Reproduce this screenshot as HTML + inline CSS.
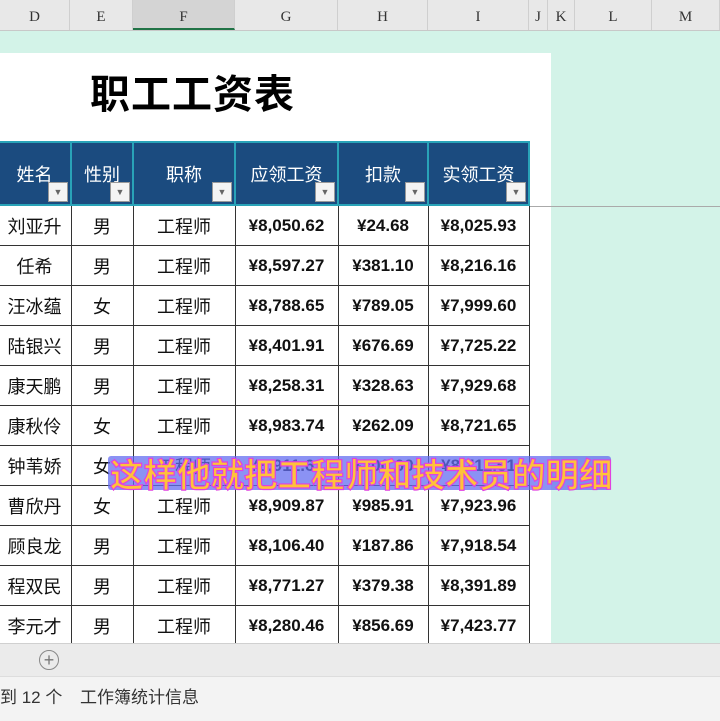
<!DOCTYPE html><html><head><meta charset="utf-8"><style>
body{margin:0;width:720px;height:720px;overflow:hidden;background:#d3f3e8;font-family:"Liberation Sans","Noto Sans CJK SC",sans-serif;position:relative}
.hdr{position:absolute;left:0;top:0;width:720px;height:30px;background:#e8e8e8;border-bottom:1px solid #c8c8c8}
.hdr div{position:absolute;top:0;height:30px;line-height:34px;text-align:center;font-family:"Liberation Serif",serif;font-size:15px;color:#333;border-right:1px solid #cfcfcf;box-sizing:border-box}
.sheet{position:absolute;left:0;top:53px;width:551px;height:590px;background:#fff}
.title{position:absolute;left:90px;top:62px;font-size:40px;font-weight:bold;color:#000;font-family:"Noto Sans CJK SC",sans-serif;letter-spacing:1px}
table{position:absolute;left:-3px;top:141px;border-collapse:collapse;font-family:"Liberation Sans","Noto Sans CJK SC",sans-serif}
td{border:1.5px solid #333;text-align:center;font-size:17px;font-weight:bold;height:39px;line-height:20px;padding:0;color:#111;vertical-align:middle}
td.c{font-weight:normal;font-size:18px;font-family:"Noto Sans CJK SC",sans-serif}
th{background:#1b4b7f;color:#fff;border:2px solid #29a3b8;font-weight:normal;font-size:18px;height:61px;position:relative;padding:0}
th span.dd{position:absolute;right:2px;bottom:2px;width:18px;height:18px;background:#f4f4f4;border:1px solid #999;color:#666;font-size:9px;line-height:18px}
.tabs{position:absolute;left:0;top:643px;width:720px;height:33px;background:#ebebeb;border-top:1px solid #d0d0d0}
.status{position:absolute;left:0;top:676px;width:720px;height:44px;background:#f3f3f3;border-top:1px solid #ddd;font-size:17px;color:#333}
.sub{position:absolute;left:108px;top:456px;height:34px;width:503px;background:rgba(100,110,240,.75);border-radius:3px}
.subt{position:absolute;left:110px;top:448px;font-size:33.5px;font-weight:bold;color:#ffc23a;font-family:"Noto Sans CJK SC",sans-serif;-webkit-text-stroke:1.2px #e040e0;white-space:nowrap}
</style></head><body>
<div class="hdr">
<div style="left:0;width:70px">D</div><div style="left:70px;width:63px">E</div><div style="left:133px;width:102px;background:#d4d4d4;border-bottom:2px solid #217346">F</div><div style="left:235px;width:103px">G</div><div style="left:338px;width:90px">H</div><div style="left:428px;width:101px">I</div><div style="left:529px;width:19px">J</div><div style="left:548px;width:27px">K</div><div style="left:575px;width:77px">L</div><div style="left:652px;width:68px">M</div>
</div>
<div class="sheet"></div>
<div class="title">职工工资表</div>
<div style="position:absolute;left:530px;top:206px;width:190px;height:1px;background:#aaa"></div>
<table>
<tr><th style="width:71px">姓名<span class="dd">▼</span></th><th style="width:60px">性别<span class="dd">▼</span></th><th style="width:100px">职称<span class="dd">▼</span></th><th style="width:101px">应领工资<span class="dd">▼</span></th><th style="width:88px">扣款<span class="dd">▼</span></th><th style="width:99px">实领工资<span class="dd">▼</span></th></tr>
<tr><td class="c">刘亚升</td><td class="c">男</td><td class="c">工程师</td><td>¥8,050.62</td><td>¥24.68</td><td>¥8,025.93</td></tr>
<tr><td class="c">任希</td><td class="c">男</td><td class="c">工程师</td><td>¥8,597.27</td><td>¥381.10</td><td>¥8,216.16</td></tr>
<tr><td class="c">汪冰蕴</td><td class="c">女</td><td class="c">工程师</td><td>¥8,788.65</td><td>¥789.05</td><td>¥7,999.60</td></tr>
<tr><td class="c">陆银兴</td><td class="c">男</td><td class="c">工程师</td><td>¥8,401.91</td><td>¥676.69</td><td>¥7,725.22</td></tr>
<tr><td class="c">康天鹏</td><td class="c">男</td><td class="c">工程师</td><td>¥8,258.31</td><td>¥328.63</td><td>¥7,929.68</td></tr>
<tr><td class="c">康秋伶</td><td class="c">女</td><td class="c">工程师</td><td>¥8,983.74</td><td>¥262.09</td><td>¥8,721.65</td></tr>
<tr><td class="c">钟苇娇</td><td class="c">女</td><td class="c">工程师</td><td>¥8,911.61</td><td>¥200.00</td><td>¥8,711.61</td></tr>
<tr><td class="c">曹欣丹</td><td class="c">女</td><td class="c">工程师</td><td>¥8,909.87</td><td>¥985.91</td><td>¥7,923.96</td></tr>
<tr><td class="c">顾良龙</td><td class="c">男</td><td class="c">工程师</td><td>¥8,106.40</td><td>¥187.86</td><td>¥7,918.54</td></tr>
<tr><td class="c">程双民</td><td class="c">男</td><td class="c">工程师</td><td>¥8,771.27</td><td>¥379.38</td><td>¥8,391.89</td></tr>
<tr><td class="c">李元才</td><td class="c">男</td><td class="c">工程师</td><td>¥8,280.46</td><td>¥856.69</td><td>¥7,423.77</td></tr>
</table>
<div class="sub"></div>
<div class="subt">这样他就把工程师和技术员的明细</div>
<div class="tabs"><div style="position:absolute;left:39px;top:6px;width:18px;height:18px;border:1.5px solid #888;border-radius:50%;text-align:center;line-height:18px;color:#777;font-size:18px">+</div></div>
<div class="status"><span style="position:absolute;left:0;top:6px">到 12 个</span><span style="position:absolute;left:80px;top:6px">工作簿统计信息</span></div>
</body></html>
